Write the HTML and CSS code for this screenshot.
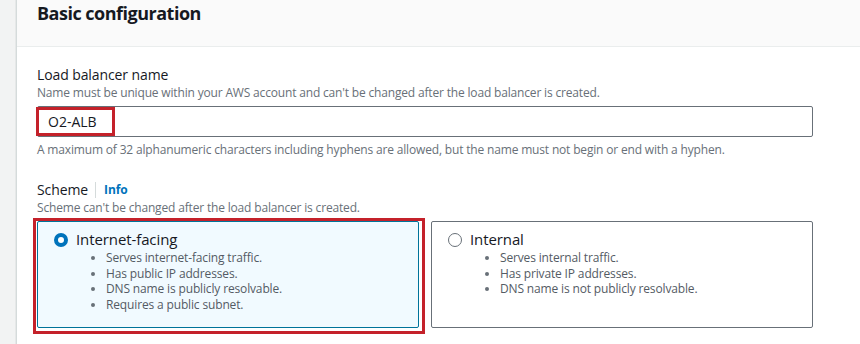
FILE: index.html
```html
<!DOCTYPE html>
<html lang="en">
<head>
    <meta charset="UTF-8">
    <title>Basic configuration</title>
    <link rel="stylesheet" href="styles.css">
</head>
<body>
    <div class="page">
        <div class="gutter"></div>
        <div class="panel">
            <div class="panel-header">
                <h2>Basic configuration</h2>
            </div>
            <div class="panel-body">
                <div class="field">
                    <label class="field-label">Load balancer name</label>
                    <div class="field-desc">Name must be unique within your AWS account and can't be changed after the load balancer is created.</div>
                    <div class="input-wrap">
                        <input class="text-input" type="text" value="O2-ALB">
                        <span class="mark mark-input"></span>
                    </div>
                    <div class="field-hint">A maximum of 32 alphanumeric characters including hyphens are allowed, but the name must not begin or end with a hyphen.</div>
                </div>

                <div class="field field-scheme">
                    <div class="field-label">
                        Scheme <span class="divider"></span> <a class="info-link" href="#">Info</a>
                    </div>
                    <div class="field-desc">Scheme can't be changed after the load balancer is created.</div>
                    <div class="tiles">
                        <div class="tile-wrap">
                            <label class="tile tile-selected">
                                <span class="tile-head">
                                    <span class="radio radio-checked"></span>
                                    Internet-facing
                                </span>
                                <ul class="tile-list">
                                    <li>Serves internet-facing traffic.</li>
                                    <li>Has public IP addresses.</li>
                                    <li>DNS name is publicly resolvable.</li>
                                    <li>Requires a public subnet.</li>
                                </ul>
                            </label>
                            <span class="mark mark-tile"></span>
                        </div>
                        <div class="tile-wrap">
                            <label class="tile">
                                <span class="tile-head">
                                    <span class="radio"></span>
                                    Internal
                                </span>
                                <ul class="tile-list">
                                    <li>Serves internal traffic.</li>
                                    <li>Has private IP addresses.</li>
                                    <li>DNS name is not publicly resolvable.</li>
                                </ul>
                            </label>
                        </div>
                    </div>
                </div>
            </div>
        </div>
    </div>
</body>
</html>
```

FILE: styles.css
```css
body {
    margin: 0;
    padding: 0;
    background-color: #f2f3f3;
    color: #16191f;
    font-family: "Open Sans", Arial, sans-serif;
}
.page {
    display: flex;
    height: 344px;
    overflow: hidden;
}
.gutter {
    width: 16px;
    flex-shrink: 0;
}
.panel {
    flex: 1;
    background-color: #fff;
    border-left: 1px solid #d5dbdb;
    box-shadow: -1px 0 0 #e6e8e8;
}
.panel-header {
    background-color: #fafafa;
    border-bottom: 1px solid #eaeded;
    height: 46px;
    padding: 0 20px;
}
.panel-header h2 {
    margin: 0;
    padding-top: 1px;
    font-size: 18px;
    font-weight: 700;
    line-height: 24px;
    letter-spacing: -0.5px;
}
.panel-body {
    padding: 18px 47px 0 20px;
}
.field-label {
    font-size: 14px;
    line-height: 20px;
    display: flex;
    align-items: center;
    letter-spacing: -0.1px;
}
.field-desc, .field-hint {
    font-size: 12px;
    line-height: 16px;
    color: #687078;
    letter-spacing: -0.17px;
}
.input-wrap {
    position: relative;
    margin-top: 5px;
}
.text-input {
    display: block;
    box-sizing: border-box;
    width: 100%;
    height: 31px;
    border: 1px solid #687078;
    border-radius: 2px;
    padding: 0 10px;
    font-family: inherit;
    font-size: 14px;
    color: #16191f;
    background: #fff;
}
.field-hint {
    margin-top: 5px;
}
.field-scheme {
    margin-top: 22px;
}
.divider {
    display: inline-block;
    width: 1px;
    height: 16px;
    background-color: #d5dbdb;
    margin: 0 8px 0 7px;
}
.info-link {
    color: #0073bb;
    font-size: 12px;
    font-weight: 700;
    text-decoration: none;
}
.tiles {
    display: flex;
    gap: 12px;
    margin-top: 5px;
}
.tile-wrap {
    position: relative;
    flex: 1;
}
.tile {
    display: block;
    box-sizing: border-box;
    height: 107px;
    border: 1px solid #687078;
    border-radius: 2px;
    padding: 8px 16px;
}
.tile-selected {
    border-color: #00739a;
    background-color: #f1faff;
}
.tile-head {
    display: flex;
    align-items: center;
    font-size: 15px;
    line-height: 19px;
    letter-spacing: -0.1px;
}
.radio {
    box-sizing: border-box;
    width: 14px;
    height: 14px;
    border-radius: 50%;
    border: 1px solid #687078;
    background: #fff;
    margin-right: 8px;
}
.radio-checked {
    border: 4px solid #0073bb;
}
.tile-list {
    margin: 1px 0 0;
    padding-left: 52px;
    font-size: 12px;
    line-height: 15.6px;
    color: #545b64;
    letter-spacing: -0.15px;
}
.tile-list li::marker {
    color: #687078;
}
.mark {
    position: absolute;
    border: 3px solid #c4212a;
    pointer-events: none;
}
.mark-input {
    left: -1px;
    top: 1px;
    width: 73px;
    height: 23px;
}
.mark-tile {
    left: -4px;
    top: -3px;
    right: -6px;
    bottom: -6px;
}
```
